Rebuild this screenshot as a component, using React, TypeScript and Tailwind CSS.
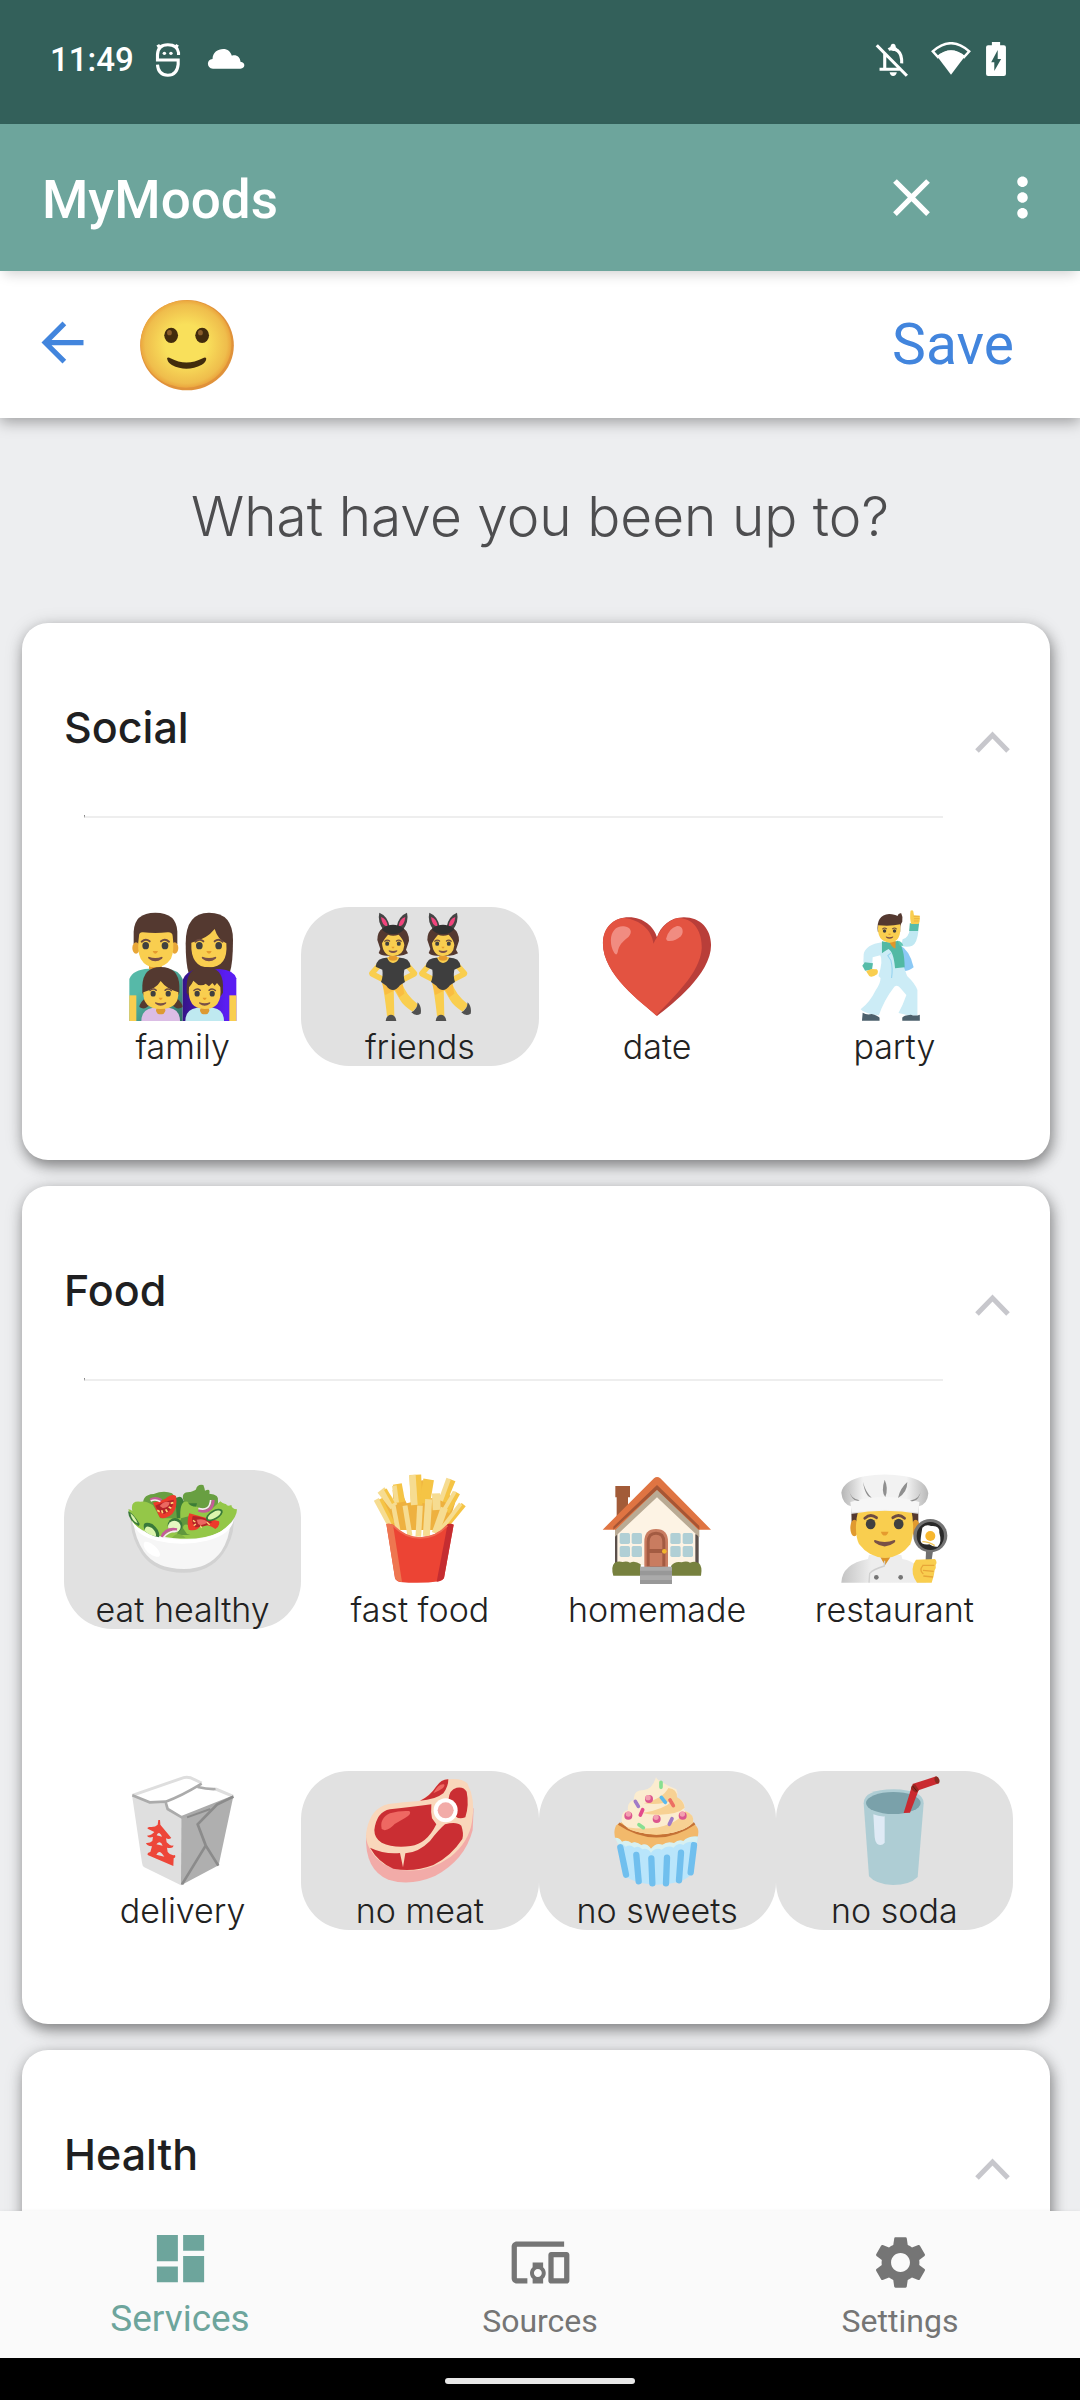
import { useState } from "react";
import type { ReactNode } from "react";
import { MdArrowBack, MdClose, MdDashboard, MdDevicesOther, MdMoreVert, MdSettings } from "react-icons/md";

const SKIN = "#f9ce4f";
const HAIR = "#543930";

type FaceProps = { x: number; y: number; s: number };

function Features({ x, y, s }: FaceProps) {
  return (
    <g transform={`translate(${x} ${y}) scale(${s})`}>
      <path d="M-41 -12Q-29 -23 -17 -13M17 -13Q29 -23 41 -12" fill="none" stroke="#6d4c41" strokeWidth="6" strokeLinecap="round" />
      <ellipse cx="-29" cy="0" rx="10" ry="11" fill="#404040" />
      <ellipse cx="29" cy="0" rx="10" ry="11" fill="#404040" />
      <path d="M-8 16H8Q5 24 0 24Q-5 24 -8 16Z" fill="#e59b2e" />
      <path d="M-20 33Q0 41 20 33Q24 34 20 39Q0 54 -20 39Q-24 34 -20 33Z" fill="#795046" />
    </g>
  );
}

function Art({ box, children }: { box: string; children: ReactNode }) {
  return (
    <svg viewBox={box} className="size-[120px]" aria-hidden="true">
      {children}
    </svg>
  );
}

function Family() {
  return (
    <Art box="188 81 360 360">
      <defs>
        <linearGradient id="teal" x1="0" y1="0" x2="1" y2="1">
          <stop offset="0.3" stopColor="#56b9a8" />
          <stop offset="1" stopColor="#2f6f63" />
        </linearGradient>
        <linearGradient id="violet" x1="0" x2="1">
          <stop offset="0" stopColor="#351487" />
          <stop offset="0.8" stopColor="#5a1df2" />
        </linearGradient>
      </defs>
      <path d="M207 423V297Q218 268 265 266H318Q355 268 367 297V423Z" fill="url(#teal)" />
      <path d="M207 346H228V423H207Z" fill={SKIN} />
      <path d="M376 190Q376 98 446 98Q518 98 518 180Q518 250 508 280H385Q376 250 376 190Z" fill={HAIR} />
      <path d="M367 423V300Q375 275 410 267H478Q520 270 528 295V423Z" fill="url(#violet)" />
      <path d="M507 346H528V423H507Z" fill={SKIN} />
      <path d="M266 250H304V268H266Z" fill="#e59b2e" />
      <path d="M220 190V155Q222 98 285 98Q349 98 351 155V190L345 208H226Z" fill={HAIR} />
      <ellipse cx="227" cy="204" rx="11" ry="17" fill="#e8a638" />
      <ellipse cx="343" cy="204" rx="11" ry="17" fill="#e8a638" />
      <path d="M236 168Q236 156 248 157Q285 161 322 157Q336 156 337 168Q343 212 332 236Q313 262 285 262Q256 262 241 236Q229 212 236 168Z" fill={SKIN} />
      <Features x={285} y={197} s={1} />
      <path d="M393 188Q440 177 463 147Q473 180 498 190Q504 262 446 262Q390 262 393 188Z" fill={SKIN} />
      <Features x={446} y={197} s={1} />
      <path d="M258 352Q238 368 237 381Q253 393 270 372ZM346 352Q366 368 367 381Q350 393 333 372Z" fill={HAIR} />
      <path d="M246 338V318Q248 261 301 261Q355 261 357 318V338L350 352H253Z" fill={HAIR} />
      <path d="M243 423Q243 388 278 383H326Q359 388 359 423Z" fill="#dbbde5" />
      <ellipse cx="301" cy="391" rx="14" ry="12" fill="#dd9a32" />
      <path d="M249 337Q288 326 301 303Q319 327 354 337Q356 387 301 387Q247 387 249 337Z" fill={SKIN} />
      <Features x={301} y={341} s={0.78} />
      <path d="M379 338V316Q381 261 433 261Q487 261 488 316V338L480 350H387Z" fill={HAIR} />
      <path d="M375 423Q375 388 410 383H458Q491 388 491 423Z" fill="#bfe9f0" />
      <ellipse cx="433" cy="391" rx="14" ry="12" fill="#dd9a32" />
      <path d="M386 322Q394 314 399 302L414 315Q430 317 436 311L446 319L456 309L463 317L470 309L480 321Q487 387 433 387Q380 387 386 322Z" fill={SKIN} />
      <Features x={433} y={341} s={0.78} />
    </Art>
  );
}

function Bunny() {
  return (
    <>
      <path d="M958 98Q984 108 990 143L972 152Q951 125 958 98ZM1041 98Q1015 108 1009 143L1027 152Q1048 125 1041 98Z" fill="#444" />
      <path d="M963 111Q981 117 983 139Q966 139 963 111ZM1036 111Q1018 117 1016 139Q1033 139 1036 111Z" fill="#f0437c" />
      <path d="M952 180Q952 155 968 145Q1000 130 1030 145Q1047 157 1047 182L1038 209L1044 220Q1030 228 1015 227H983Q965 228 956 219L961 207Z" fill={HAIR} />
      <path d="M965 147Q999 122 1033 147Q1020 164 999 162Q978 164 965 147Z" fill="#303030" />
      <path d="M936 280L955 258M1063 280L1044 258M937 282L972 300M1062 282L1027 300" stroke={SKIN} strokeWidth="17" strokeLinecap="round" strokeLinejoin="round" fill="none" />
      <path d="M966 305Q975 350 981 408H1003L1001 320ZM1000 325L1026 308Q1035 342 1075 374L1058 395Q1030 378 1019 358Z" fill={SKIN} />
      <path d="M967 310L976 345L1000 333L1007 330L1018 352L1033 341L1027 310Z" fill="#f9bd41" />
      <path d="M957 239Q970 232 982 233Q999 251 1017 233Q1030 232 1042 239Q1050 246 1052 260L1033 269Q1029 290 1035 306L1020 316Q1010 330 999 330Q988 330 979 317L963 306Q970 290 967 269L947 260Q949 246 957 239Z" fill="#3e3e3e" />
      <path d="M981 232Q999 226 1018 232Q1012 249 999 249Q987 249 981 232Z" fill={SKIN} />
      <ellipse cx="999" cy="234" rx="13" ry="8" fill="#e59b2e" />
      <path d="M966 190Q972 177 984 164Q999 170 1016 164Q1032 180 1033 196Q1030 228 999 228Q969 228 966 190Z" fill={SKIN} />
      <Features x={999} y={191} s={0.6} />
      <path d="M977 423Q979 405 993 404Q1007 405 1009 423ZM1054 397Q1072 388 1073 367Q1086 381 1082 401Q1067 410 1054 397Z" fill="#505050" />
    </>
  );
}

function Friends() {
  return (
    <Art box="900 81 360 360">
      <Bunny />
      <g transform="translate(150 0)">
        <Bunny />
      </g>
    </Art>
  );
}

function Heart() {
  return (
    <Art box="160 81 360 360">
      <g transform="translate(340) scale(1.033 1) translate(-340)">
        <path d="M340 408C296 367 183 285 183 190C183 142 216 112 258 112C302 112 332 142 340 172C350 140 378 112 418 112C466 112 497 147 497 195C497 282 385 372 340 408Z" fill="#b93e39" />
        <path d="M338 407C294 366 183 285 183 190C183 142 215 114 246 114C292 120 325 150 330 191Q334 180 340 172C352 142 376 118 402 114C448 115 471 155 470 205C466 282 380 357 338 407Z" fill="#e35341" />
        <path d="M206 180C207 153 222 137 244 139C263 141 271 156 257 171C239 186 229 196 226 216Q223 229 216 219Q206 203 206 180Z" fill="#f18c81" />
        <path d="M367 175Q374 145 398 138C414 136 420 155 409 169Q393 185 373 183Q366 182 367 175Z" fill="#f18c81" />
      </g>
    </Art>
  );
}

function Dancer() {
  return (
    <Art box="849 81 360 360">
      <g transform="translate(1029) scale(1.033 1) translate(-1029)">
        <path d="M1054 178Q1071 175 1075 148L1100 152Q1096 190 1082 197Q1070 203 1050 198Z" fill="#c0e8f2" />
        <path d="M1045 195Q1075 210 1086 262Q1074 273 1058 273Z" fill="#8cc9f5" />
        <path d="M1075 130H1102L1099 153H1073Z" fill="#56bca9" />
        <path d="M1077 92Q1083 88 1085 94L1087 106L1104 107Q1105 130 1099 132H1079Q1074 115 1077 92Z" fill={SKIN} />
        <path d="M1086 109H1103M1087 116H1103M1087 123H1101" stroke="#e8a638" strokeWidth="2" />
        <path d="M994 187Q947 194 941 222L940 248L966 251L967 232L989 226Q998 240 984 288L990 294Q990 310 975 332Q960 365 932 388Q943 402 985 406Q1000 360 1030 320Q1040 312 1048 325L1065 345Q1055 375 1042 399Q1070 408 1097 407V330Q1090 310 1067 288L1058 262L1042 195Z" fill="#ccecf6" />
        <path d="M994 184Q1020 190 1040 182Q1059 200 1060 262L1032 265Q1028 215 1013 207Q1003 212 994 220Z" fill="#52b9a4" />
        <path d="M1040 182Q1052 184 1056 197H1046Z" fill="#61c7b3" />
        <path d="M1015 182L1034 184L1033 206Q1020 200 1015 182Z" fill="#df9629" />
        <path d="M1020 219L1011 227L1020 241Q1026 265 1022 294" fill="none" stroke="#94d2f0" strokeWidth="3" />
        <path d="M944 247L968 250L965 269L945 272L937 257Z" fill="#56bca9" />
        <path d="M948 274L963 267L979 268Q985 273 980 283Q965 294 957 288Z" fill={SKIN} />
        <path d="M982 155Q976 105 1015 102Q1032 104 1039 108Q1042 98 1050 100Q1056 112 1053 125Q1046 133 1047 155Z" fill={HAIR} />
        <path d="M983 136Q1020 140 1047 133Q1052 187 1016 188Q978 184 983 136Z" fill={SKIN} />
        <Features x={1016} y={153} s={0.5} />
        <path d="M938 398Q950 406 964 402Q982 407 987 413V422H936ZM1104 404Q1090 409 1078 404Q1056 406 1053 413V422H1104Z" fill="#4c606c" />
      </g>
    </Art>
  );
}

function Salad() {
  return (
    <Art box="188 90 360 360">
      <path d="M211 235Q210 290 244 341Q282 398 370 398Q448 397 488 341Q524 290 520 232Z" fill="#d2d2d2" />
      <path d="M219 235Q220 287 250 334Q285 387 371 387Q445 387 483 334Q511 290 511 232Z" fill="#f6f6f6" />
      <path d="M253 306C270 300 310 338 296 350C274 354 240 322 253 306Z" fill="#fff" />
      <path d="M250 205Q240 164 280 162Q310 150 335 160Q350 180 370 183Q360 155 390 156Q405 152 407 148Q411 131 429 135Q433 145 434 152Q451 143 447 161Q478 162 473 185L470 250H250Z" fill="#689f41" />
      <path d="M345 175Q368 160 370 190H410L400 225L350 240Z" fill="#3c7d36" />
      <path d="M204 208Q210 207 216 213Q209 181 240 185Q258 181 278 196L300 235L360 235Q357 180 382 185Q387 200 410 200L440 220L480 184Q489 193 497 192Q500 200 513 195Q514 207 530 208Q530 240 480 275Q430 300 360 296Q250 290 215 245Z" fill="#94c748" />
      <path d="M362 235L420 220L430 285H350Z" fill="#60983d" />
      <path d="M385 220L440 212L475 240L470 275L408 290L380 282L368 265Q368 250 385 255Z" fill="#94c748" />
      <path d="M278 188Q299 184 315 176Q335 160 347 168Q353 202 336 222Q310 241 298 232Z" fill="#ed3b2b" />
      <path d="M285 197Q310 183 341 179Q336 215 311 222Q294 218 285 197Z" fill="#b52328" />
      <path d="M298 198Q313 180 328 187Q325 205 307 204Z" fill="#eb6860" />
      <path d="M291 211l7 4M304 211l3 9M316 208l5 8M325 201l8 4M331 190l8 -2" stroke="#ffd879" strokeWidth="5" />
      <path d="M387 220L430 232L476 244Q480 257 465 267Q445 250 420 258Q410 275 385 269Q378 241 387 220Z" fill="#ed3b2b" />
      <path d="M397 228Q430 230 456 246Q435 262 405 262Q391 250 397 228Z" fill="#b52328" />
      <path d="M409 239Q430 234 443 247Q425 260 413 252Z" fill="#eb6860" />
      <path d="M398 241l7 5M400 257l7 -5M420 257l4 7M440 247l8 7" stroke="#ffd879" strokeWidth="4" />
      <ellipse cx="462" cy="225" rx="28" ry="14" transform="rotate(-30 462 225)" fill="#39793a" />
      <ellipse cx="462" cy="225" rx="22" ry="9" transform="rotate(-30 462 225)" fill="#dcf5ad" />
      <path d="M203 214Q220 220 238 252L235 258Q205 243 203 214Z" fill="#39793a" />
      <path d="M210 220Q223 228 232 250Q215 245 210 220Z" fill="#dcf5ad" />
      <path d="M252 268Q243 240 276 252Q301 272 296 294Q260 287 252 268Z" fill="#39793a" />
      <path d="M253 271Q255 252 275 264Q290 278 287 289Q260 285 253 271Z" fill="#dcf5ad" />
      <ellipse cx="344" cy="256" rx="22" ry="22" fill="#39793a" />
      <ellipse cx="342" cy="260" rx="19" ry="18" fill="#e5f8c2" />
      <path d="M270 180Q285 170 303 181M414 210Q455 224 459 180M305 291Q316 263 350 269" stroke="#c45d98" strokeWidth="9" fill="none" />
      <path d="M271 183Q286 176 300 185M414 205Q448 215 451 180M309 293Q322 274 349 273" stroke="#f7ecf3" strokeWidth="5" fill="none" />
      <path d="M335 294Q352 270 376 294Z" fill="#7fb341" />
      <path d="M215 242Q250 298 365 299Q480 300 521 237Q512 285 440 302Q365 320 290 302Q222 285 215 242Z" fill="#fff" />
    </Art>
  );
}

function Fries() {
  return (
    <Art box="900 90 360 360">
      <path d="M965 175L1000 180L998 150L1020 148L1040 190L1060 185L1066 130L1088 120L1100 180L1140 165L1165 160L1185 190L1160 270H1000Z" fill="#eeb13f" />
      <g fill="none" strokeLinecap="butt">
        <path d="M1066 104L1070 195" stroke="#f5c445" strokeWidth="35" />
        <path d="M1057 105L1063 195" stroke="#f6dc91" strokeWidth="20" />
        <path d="M1012 132L1022 187" stroke="#f5c445" strokeWidth="27" />
        <path d="M1003 137L1010 188" stroke="#f6dc91" strokeWidth="14" />
        <path d="M1106 118L1094 190" stroke="#f5c445" strokeWidth="32" />
        <path d="M1177 120L1150 185" stroke="#f5c445" strokeWidth="20" />
        <path d="M1166 116L1142 182" stroke="#f6dc91" strokeWidth="14" />
        <path d="M1128 160L1130 210" stroke="#f6dc91" strokeWidth="24" />
        <path d="M1192 158L1160 215" stroke="#f5c445" strokeWidth="18" />
        <path d="M1184 155L1152 210" stroke="#f6dc91" strokeWidth="12" />
        <path d="M963 150L1002 200" stroke="#f6dc91" strokeWidth="26" />
        <path d="M976 148L1000 190" stroke="#f5c445" strokeWidth="9" />
        <path d="M949 178L990 254" stroke="#f6dc91" strokeWidth="17" />
        <path d="M962 176L999 250" stroke="#f5c445" strokeWidth="10" />
        <path d="M1106 178L1099 288" stroke="#f6dc91" strokeWidth="21" />
        <path d="M1211 194L1155 262" stroke="#f5c445" strokeWidth="16" />
        <path d="M1202 191L1142 270" stroke="#f6dc91" strokeWidth="12" />
        <path d="M1153 204L1126 280" stroke="#f6dc91" strokeWidth="22" />
        <path d="M1000 198L1015 275" stroke="#f6dc91" strokeWidth="14" />
        <path d="M1035 197L1050 288" stroke="#f6dc91" strokeWidth="15" />
        <path d="M1080 197L1075 290" stroke="#f6dc91" strokeWidth="17" />
      </g>
      <path d="M979 252Q990 250 999 254Q1035 293 1081 292Q1130 291 1163 252Q1174 250 1181 254L1152 414Q1149 421 1138 424Q1081 432 1020 426Q1008 423 1005 414Z" fill="#ec4434" />
      <path d="M979 252Q990 250 999 254L1026 426Q1008 423 1005 414Z" fill="#ee7650" />
      <path d="M1163 252Q1174 250 1181 254L1152 414Q1149 421 1130 425Z" fill="#c52d31" />
      <path d="M999 257Q1038 295 1081 294Q1128 293 1162 257" fill="none" stroke="#ef6a51" strokeWidth="5" />
    </Art>
  );
}

function House() {
  return (
    <Art box="171 90 360 360">
      <path d="M226 138H270V172H264V215L230 235V172H226Z" fill="#a25b38" />
      <path d="M225 260L351 145L475 260V375H225Z" fill="#fdf3e4" />
      <path d="M225 283H232V378H225ZM466 283H476V378H466Z" fill="#5b504b" />
      <path d="M351 147L478 268V292L351 172L225 290V268Z" fill="#b9aa94" />
      <path d="M188 269L342 115Q351 107 361 115L513 269H475L351 149L227 269Z" fill="#df7442" />
      <path d="M351 135L478 258V269L351 149L220 269V260Z" fill="#a65635" />
      <g fill="#b0cfd5">
        <rect x="239" y="279" width="31" height="33" rx="5" />
        <rect x="275" y="279" width="31" height="33" rx="5" />
        <rect x="239" y="318" width="31" height="33" rx="5" />
        <rect x="275" y="318" width="31" height="33" rx="5" />
        <rect x="391" y="279" width="31" height="33" rx="5" />
        <rect x="428" y="279" width="31" height="33" rx="5" />
        <rect x="391" y="318" width="31" height="33" rx="5" />
        <rect x="428" y="318" width="31" height="33" rx="5" />
      </g>
      <path d="M313 382V305Q313 267 348 267Q384 267 384 305V382Z" fill="#c97c60" />
      <path d="M320 380V306Q321 275 348 275Q376 275 376 306V380Z" fill="#a35b42" />
      <path d="M329 327V306Q329 284 348 284Q367 284 367 306V327ZM329 339H367V378H329Z" fill="#c97c60" />
      <circle cx="373" cy="334" r="7" fill="#f2b52d" />
      <path d="M220 407Q212 380 224 368Q235 362 248 366Q260 362 270 368Q285 361 302 373V407ZM393 407V378Q405 362 425 367Q440 362 450 368Q465 361 477 370Q488 380 483 407Z" fill="#77813f" />
      <path d="M300 380H396V432H300Z" fill="#aaa" />
      <path d="M300 392H396V406H300ZM300 420H396V432H300Z" fill="#989898" />
    </Art>
  );
}

function Chef() {
  return (
    <Art box="883 90 360 360">
      <defs>
        <linearGradient id="hat" x1="0" x2="1">
          <stop offset="0" stopColor="#b5b5b5" />
          <stop offset="0.25" stopColor="#f2f2f2" />
          <stop offset="0.75" stopColor="#f2f2f2" />
          <stop offset="1" stopColor="#b8b8b8" />
        </linearGradient>
        <linearGradient id="coat" x1="0" x2="1">
          <stop offset="0" stopColor="#c4c4c4" />
          <stop offset="0.35" stopColor="#ededed" />
        </linearGradient>
      </defs>
      <path d="M905 428Q907 372 985 357L988 345H1085L1088 357Q1145 367 1160 428Z" fill="url(#coat)" />
      <path d="M1022 352H1052L1036 376Z" fill="#dc9428" />
      <path d="M1035 362L1034 378Q1000 388 990 400L988 428" fill="none" stroke="#cfcfcf" strokeWidth="4" />
      <circle cx="1010" cy="412" r="7" fill="#757575" />
      <circle cx="1083" cy="412" r="7" fill="#757575" />
      <path d="M935 215H1136V252L1125 262H946L936 252Z" fill={HAIR} />
      <ellipse cx="944" cy="264" rx="12" ry="25" fill="#e09a2f" />
      <ellipse cx="1128" cy="264" rx="12" ry="25" fill="#e09a2f" />
      <path d="M957 205H1114Q1128 270 1112 313Q1082 353 1036 354Q988 352 958 312Q940 272 957 205Z" fill={SKIN} />
      <Features x={1035} y={252} s={1.45} />
      <path d="M905 158Q912 120 975 109Q1035 98 1096 109Q1160 120 1166 160Q1164 192 1138 199V222Q1036 202 934 222V199Q908 191 905 158Z" fill="url(#hat)" />
      <path d="M932 186Q1036 156 1139 186L1136 218Q1036 200 936 218Z" fill="#f6f6f6" />
      <path d="M970 126Q978 157 996 173Q977 171 970 126ZM1035 119Q1047 145 1037 171Q1023 155 1035 119ZM1103 126Q1103 158 1075 174Q1081 145 1103 126ZM925 145Q932 177 960 181Q938 190 925 145ZM1146 145Q1142 178 1111 182Q1137 192 1146 145Z" fill="#8f8f8f" />
      <path d="M1159 333H1180L1176 360H1158Z" fill="#707070" />
      <ellipse cx="1172" cy="287" rx="51" ry="50" fill="#747474" />
      <ellipse cx="1172" cy="288" rx="41" ry="42" fill="#292929" />
      <path d="M1148 263Q1160 252 1174 258Q1201 255 1199 278Q1208 307 1194 320Q1180 322 1169 313Q1147 316 1143 304Q1142 297 1148 263Z" fill="#fff" />
      <circle cx="1172" cy="288" r="15" fill="#f7b72f" />
      <path d="M1148 305Q1168 305 1185 317" fill="none" stroke="#f1c75c" strokeWidth="4" />
      <path d="M1129 359L1186 357Q1194 367 1188 375Q1190 383 1185 391L1182 408L1176 428H1132Q1112 402 1122 371Z" fill={SKIN} />
      <path d="M1148 376H1184M1150 391L1182 394M1151 408L1180 411M1150 376Q1137 391 1151 402" fill="none" stroke="#e8a638" strokeWidth="4" />
    </Art>
  );
}

function TakeoutBox() {
  return (
    <Art box="188 93 360 360">
      <path d="M216 166L370 113Q378 111 390 113L519 168L363 232Z" fill="#fff" />
      <path d="M216 166L370 113Q378 111 390 113L424 129M466 147L519 169" fill="none" stroke="#dedede" strokeWidth="9" />
      <path d="M215 165L268 189L312 190L324 210L363 232L362 436L252 382Q246 378 245 368Z" fill="#dfdfdf" />
      <path d="M363 232L519 169L475 376L362 436Z" fill="#afafaf" />
      <path d="M216 166L268 187L316 185Q360 170 424 131M316 187L322 207L364 232L519 170M412 141Q440 148 466 147" fill="none" stroke="#ababab" strokeWidth="8" />
      <path d="M519 170L470 194L412 253L436 316L474 377M436 317L365 433" fill="none" stroke="#8b8b8b" strokeWidth="8" />
      <path d="M450 207L380 232" stroke="#8b8b8b" strokeWidth="6" />
      <path d="M294 240H299L300 254L310 266L333 294Q325 300 317 295L319 307Q331 320 339 316Q341 326 320 323L322 336Q332 349 344 345Q347 353 340 355L339 378L262 345Q260 338 270 336L275 319Q259 318 257 309Q269 310 276 303L278 291Q263 295 260 287Q275 285 282 276L262 266Q260 260 270 261Q285 262 292 254Z" fill="#ed4639" />
      <path d="M289 286Q296 270 305 290ZM288 313Q300 299 307 317ZM288 344Q297 325 312 350Z" fill="#dfdfdf" />
    </Art>
  );
}

function Steak() {
  return (
    <Art box="900 93 360 360">
      <path d="M918 285Q914 390 985 419Q1050 440 1125 408Q1215 360 1238 270L1241 205Z" fill="#f2aba8" />
      <path d="M1077 183Q1110 165 1128 140Q1145 116 1165 118Q1205 114 1222 130Q1248 180 1236 245Q1227 305 1172 350Q1110 395 1040 391Q985 391 950 355Q910 310 920 270Q932 205 985 192Q1030 186 1077 183Z" fill="#f9d7bb" />
      <path d="M1080 182Q1110 168 1128 140Q1145 117 1165 118Q1165 140 1150 160Q1125 180 1080 182Z" fill="#ca2e33" />
      <path d="M1120 160Q1135 130 1152 133Q1160 143 1120 160Z" fill="#ee6862" />
      <path d="M1165 180Q1168 148 1190 143Q1211 139 1220 155Q1228 195 1216 232Q1196 240 1185 227Q1195 210 1165 180Z" fill="#ca2e33" />
      <path d="M943 270Q950 215 990 208Q1060 200 1114 193Q1112 218 1116 235L1129 253Q1100 312 1052 318Q1000 325 965 308Q943 295 943 270Z" fill="#ca2e33" />
      <path d="M965 267Q958 235 990 220Q1020 211 1048 213Q1057 222 1035 234L1004 252Q990 268 974 271Z" fill="#ee6862" />
      <path d="M930 323Q975 344 1020 339L1029 382L1036 340Q1075 338 1110 303Q1135 270 1155 253Q1190 244 1204 257Q1212 280 1207 297Q1172 350 1120 375Q1060 398 1000 386Q955 367 930 323Z" fill="#ca2e33" />
      <circle cx="1157" cy="211" r="36" fill="#fff" />
      <circle cx="1157" cy="211" r="24" fill="#f2aba8" />
    </Art>
  );
}

function Cupcake() {
  return (
    <Art box="171 93 360 360">
      <path d="M225 293Q217 253 246 247H452Q484 260 472 293L430 330H275Z" fill="#f2b96b" />
      <path d="M236 251Q350 327 464 250" fill="none" stroke="#c57236" strokeWidth="8" />
      <path d="M348 112Q352 120 365 126Q388 140 409 148Q415 162 410 173Q434 179 434 203L432 210Q464 224 459 248Q430 279 350 283Q270 280 246 248Q240 215 264 210Q260 187 282 179Q278 151 312 150Q337 147 348 112Z" fill="#fbeccf" />
      <path d="M385 144Q412 147 411 172Q430 180 434 203Q415 222 360 224Q330 225 307 219Q370 210 400 181Q360 197 311 190Q370 175 385 144ZM437 214Q464 224 459 248Q430 279 350 283Q280 280 259 262Q390 280 437 214Z" fill="#f7d193" />
      <path d="M236 312L226 294Q240 298 248 310Q258 301 274 311Q286 302 302 316Q318 309 333 328Q350 309 367 318Q385 303 400 314Q418 299 429 309Q445 287 474 290L456 400Q432 433 350 434Q270 430 253 402Z" fill="#b9e5fb" />
      <path d="M241 322L258 404M289 345L296 424M334 355L337 430M381 353L378 430M423 338L417 421M462 315L452 397" stroke="#70bfee" strokeWidth="19" strokeLinecap="round" />
      <path d="M225 293L234 312Q249 308 257 320Q270 311 283 323Q297 315 307 328Q322 322 333 339Q346 321 365 329Q382 314 401 323Q413 307 430 315Q445 300 471 308L474 290Q445 286 430 303Q416 297 402 309Q383 302 367 314Q348 306 333 326Q320 308 304 315Q287 302 275 309Q260 298 246 305Q239 292 225 293Z" fill="#d7f0f1" />
      <g strokeWidth="11" strokeLinecap="round" fill="none">
        <path d="M363 127V142M297 254L310 263" stroke="#87df91" />
        <path d="M286 184L295 199M396 236L388 253" stroke="#a27bc7" />
        <path d="M364 172L376 187" stroke="#5abaed" />
        <path d="M390 180L400 197" stroke="#ed6e63" />
        <path d="M308 209L301 225" stroke="#e34b8c" />
      </g>
      <g fill="#dc568f">
        <circle cx="327" cy="177" r="12" />
        <circle cx="265" cy="227" r="12" />
        <circle cx="350" cy="237" r="12" />
        <circle cx="428" cy="227" r="12" />
      </g>
      <g fill="#f3a0b0">
        <circle cx="324" cy="173" r="8" />
        <circle cx="265" cy="222" r="8" />
        <circle cx="348" cy="232" r="8" />
        <circle cx="427" cy="222" r="8" />
      </g>
    </Art>
  );
}

function Soda() {
  return (
    <Art box="883 93 360 360">
      <path d="M972 190Q972 149 1062 148Q1152 150 1152 190L1134 411Q1110 435 1060 435Q1008 433 988 409Z" fill="#aecdd4" />
      <ellipse cx="1061" cy="189" rx="82" ry="33" fill="#7aa1aa" />
      <path d="M1092 219L1114 147L1136 153L1111 218Z" fill="#ca2a30" />
      <path d="M1118 132L1190 109L1198 130L1130 153Z" fill="#ca2a30" />
      <path d="M1114 148Q1113 134 1126 132L1138 151L1129 158Z" fill="#98251f" />
      <path d="M1119 138L1132 154" stroke="#5e1812" strokeWidth="3" />
      <ellipse cx="1192" cy="120" rx="7" ry="11" transform="rotate(-18 1192 120)" fill="#8a2a20" />
      <path d="M1001 223Q1018 230 1035 229V308Q1025 320 1012 311Q1006 305 1005 292Z" fill="#dfeaf5" />
    </Art>
  );
}

function Smiley() {
  return (
    <svg viewBox="392 885 300 300" className="size-[100px]" role="img" aria-label="Good mood">
      <defs>
        <radialGradient id="smile">
          <stop offset="0.45" stopColor="#f9e05b" />
          <stop offset="0.9" stopColor="#efbd4c" />
          <stop offset="1" stopColor="#eba63e" />
        </radialGradient>
      </defs>
      <g transform="translate(542) scale(1.033 1) translate(-542)">
        <ellipse cx="542" cy="1035.500" rx="136" ry="135.500" fill="#e0923a" />
        <ellipse cx="539" cy="1032" rx="132" ry="131" fill="url(#smile)" />
        <ellipse cx="496" cy="1006" rx="20" ry="23" fill="#422b0d" />
        <ellipse cx="586" cy="1006" rx="20" ry="23" fill="#422b0d" />
        <ellipse cx="491" cy="998" rx="7" ry="8" fill="#8a5c2a" />
        <ellipse cx="581" cy="998" rx="7" ry="8" fill="#8a5c2a" />
        <path d="M484 1074Q488 1070 494 1075Q540 1100 588 1075Q596 1070 598 1076Q597 1086 585 1094Q541 1118 498 1095Q485 1087 484 1074Z" fill="#422b0d" />
      </g>
    </svg>
  );
}

function StatusBar() {
  return (
    <div className="flex h-[124px] shrink-0 items-center bg-[#33605a] pr-[72px] pb-1 pl-[50px] text-white">
      <span className="w-[103px] text-[33px] leading-[40px] font-medium">11:49</span>
      <svg viewBox="445 126 87 108" preserveAspectRatio="none" className="h-9 w-[30px]" aria-hidden="true">
        <g fill="none" stroke="currentColor" strokeWidth="9">
          <path d="M459 134L465 145M516 134L510 145" />
          <path d="M519 165V158Q516 134 488 134Q459 134 458 164V180H518V193Q515 225 488 226Q460 225 458 194" />
        </g>
        <circle cx="478" cy="160" r="5" fill="currentColor" />
        <circle cx="497" cy="160" r="5" fill="currentColor" />
      </svg>
      <svg viewBox="598 126 116 108" preserveAspectRatio="none" className="ml-[23px] h-9 w-10" aria-hidden="true">
        <path d="M618 206C599 205 599 178 617 177C617 158 632 147 648 147C661 147 669 155 673 167C687 163 697 172 698 185C713 186 713 205 698 206Z" fill="currentColor" />
      </svg>
      <svg viewBox="971 126 104 108" preserveAspectRatio="none" className="ml-auto h-9 w-9" aria-hidden="true">
        <g fill="none" stroke="currentColor" strokeWidth="9">
          <path d="M979 136L1066 227M987 208H1050M1002 161V208M1013 148Q1027 143 1040 153Q1052 163 1051 190" />
        </g>
        <path d="M1010 146L1018 142Q1019 132 1026 131Q1034 132 1034 142L1044 151L1027 153ZM1016 217H1037Q1035 228 1026 228Q1018 228 1016 217Z" fill="currentColor" />
      </svg>
      <svg viewBox="1131 126 122 108" preserveAspectRatio="none" className="ml-5 h-9 w-[42px]" aria-hidden="true">
        <path d="M1139 154Q1192 105 1245 154L1230 171Q1192 139 1154 171Z" fill="none" stroke="currentColor" strokeWidth="7" />
        <path d="M1151 168Q1192 134 1233 168L1192 224Z" fill="currentColor" />
      </svg>
      <svg viewBox="1289 126 70 108" preserveAspectRatio="none" className="ml-3 h-9 w-6" aria-hidden="true">
        <path fillRule="evenodd" d="M1312 126H1336V136H1347Q1353 136 1353 142V222Q1353 228 1347 228H1301Q1295 228 1295 222V142Q1295 136 1301 136H1312ZM1329 150L1310 187H1319V213L1339 177H1329Z" fill="currentColor" />
      </svg>
    </div>
  );
}

type Activity = { name: string; art: () => ReactNode; chosen?: boolean };

const SOCIAL: Activity[] = [
  { name: "family", art: Family },
  { name: "friends", art: Friends, chosen: true },
  { name: "date", art: Heart },
  { name: "party", art: Dancer },
];

const FOOD: Activity[] = [
  { name: "eat healthy", art: Salad, chosen: true },
  { name: "fast food", art: Fries },
  { name: "homemade", art: House },
  { name: "restaurant", art: Chef },
  { name: "delivery", art: TakeoutBox },
  { name: "no meat", art: Steak, chosen: true },
  { name: "no sweets", art: Cupcake, chosen: true },
  { name: "no soda", art: Soda, chosen: true },
];

function ActivityButton({ name, art: Picture, chosen = false }: Activity) {
  const [on, setOn] = useState(chosen);
  return (
    <button
      type="button"
      aria-pressed={on}
      onClick={() => setOn(!on)}
      className="flex flex-col items-center rounded-[48px] text-[#222] aria-pressed:bg-[#e1e1e1]"
    >
      <Picture />
      <span className="text-[34px] leading-[39px] font-light whitespace-nowrap">{name}</span>
    </button>
  );
}

function Card({ title, items }: { title: string; items: Activity[] }) {
  const [open, setOpen] = useState(true);
  return (
    <section className="rounded-[26px] bg-white pr-[37px] pb-[94px] pl-[42px] shadow-[2px_6px_14px_rgba(0,0,0,0.4),0_2px_20px_rgba(0,0,0,0.12)]">
      <div className="flex h-[192px] justify-between pt-[78px]">
        <h2 className="text-[43px] leading-[52px] font-medium text-[#1f1f21]">{title}</h2>
        <button type="button" aria-label={`Toggle ${title}`} aria-expanded={open} onClick={() => setOpen(!open)} className="mt-[21px] h-10 w-10">
          <svg viewBox="0 0 40 40" aria-hidden="true">
            <path d="M4 29L19.500 13L35 29" fill="none" stroke="#c7c7cc" strokeWidth="5" />
          </svg>
        </button>
      </div>
      <hr className="mr-[70px] ml-5 h-[3px] border-0 border-b-2 border-l border-b-[#eee] border-l-[#888]" />
      {open && (
        <div className="mt-[89px] grid grid-cols-4 gap-y-[142px]">
          {items.map((item) => (
            <ActivityButton key={item.name} {...item} />
          ))}
        </div>
      )}
    </section>
  );
}

export default function App() {
  return (
    <div className="flex h-screen flex-col overflow-hidden bg-[#edeef0] font-['Roboto',sans-serif]">
      <StatusBar />
      <header className="relative z-20 flex h-[147px] shrink-0 items-center bg-[#6da59c] pr-[26px] pl-[42px] text-white shadow-[0_7px_12px_-4px_rgba(0,0,0,0.18)]">
        <h1 className="pt-1 text-[53px] leading-[64px] font-medium">MyMoods</h1>
        <button type="button" aria-label="Close" className="ml-auto">
          <MdClose className="size-[63px]" />
        </button>
        <button type="button" aria-label="More options" className="ml-12">
          <MdMoreVert className="size-[63px]" />
        </button>
      </header>
      <div className="relative z-10 flex h-[147px] shrink-0 items-center bg-white pr-[66px] pl-[31px] text-[#4285dd] shadow-[0_4px_14px_rgba(0,0,0,0.34)]">
        <button type="button" aria-label="Back" className="pb-1">
          <MdArrowBack className="size-[63px]" />
        </button>
        <div className="ml-[43px]">
          <Smiley />
        </div>
        <button type="button" className="ml-auto text-[57px] leading-[66px]">
          Save
        </button>
      </div>
      <main className="min-h-0 flex-1 overflow-y-auto font-['Inter',sans-serif] [scrollbar-width:none]">
        <p className="pt-[66px] pb-[75px] text-center text-[55px] leading-[64px] font-light text-[#4d4d4f]">What have you been up to?</p>
        <div className="flex flex-col gap-[26px] pr-[30px] pl-[22px]">
          <Card title="Social" items={SOCIAL} />
          <Card title="Food" items={FOOD} />
          <Card title="Health" items={[]} />
        </div>
      </main>
      <nav className="relative z-10 grid h-[147px] shrink-0 grid-cols-3 bg-[#fafafa] text-[32px] leading-[40px] text-[#757575] shadow-[0_0_4px_rgba(0,0,0,0.06)]">
        <a href="#services" aria-current="page" className="flex flex-col items-center pt-4 text-[37px] text-[#6da59c]">
          <MdDashboard className="size-[63px]" />
          <span className="mt-[9px]">Services</span>
        </a>
        <a href="#sources" className="flex flex-col items-center pt-5">
          <MdDevicesOther className="size-[63px]" />
          <span className="mt-[7px]">Sources</span>
        </a>
        <a href="#settings" className="flex flex-col items-center pt-5">
          <MdSettings className="size-[63px]" />
          <span className="mt-[7px]">Settings</span>
        </a>
      </nav>
      <div className="flex h-[42px] shrink-0 items-center justify-center bg-black pt-[3px]">
        <span className="h-1.5 w-[190px] rounded-full bg-[#e8e8e8]" />
      </div>
    </div>
  );
}
